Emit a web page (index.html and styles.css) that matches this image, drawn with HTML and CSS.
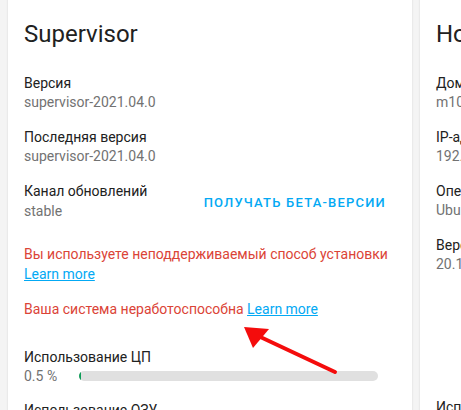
FILE: index.html
```html
<!DOCTYPE html>
<html lang="ru">
  <head>
    <meta charset="UTF-8" />
    <meta name="viewport" content="width=device-width, initial-scale=1.0" />
    <title>Supervisor</title>
    <link rel="stylesheet" href="styles.css">
  </head>
  <body>
    <main class="cards">
      <section class="card">
        <h1 class="card-title">Supervisor</h1>
        <div class="row">
          <div>
            <div class="label">Версия</div>
            <div class="value">supervisor-2021.04.0</div>
          </div>
        </div>
        <div class="row">
          <div>
            <div class="label">Последняя версия</div>
            <div class="value">supervisor-2021.04.0</div>
          </div>
        </div>
        <div class="row row-action">
          <div>
            <div class="label">Канал обновлений</div>
            <div class="value">stable</div>
          </div>
          <button class="btn">Получать бета-версии</button>
        </div>
        <div class="error">
          Вы используете неподдерживаемый способ установки
          <a href="#">Learn more</a>
        </div>
        <div class="error">
          Ваша система неработоспособна <a href="#">Learn more</a>
        </div>
        <div class="row row-metric">
          <div class="label">Использование ЦП</div>
          <div class="metric">
            <span class="value">0.5 %</span>
            <div class="bar"><div class="bar-fill" style="width: 0.5%"></div></div>
          </div>
        </div>
        <div class="row row-metric">
          <div class="label">Использование ОЗУ</div>
        </div>
      </section>

      <section class="card card-side">
        <h1 class="card-title">Host</h1>
        <div class="row">
          <div>
            <div class="label">Доменное имя</div>
            <div class="value">m10</div>
          </div>
        </div>
        <div class="row">
          <div>
            <div class="label">IP-адрес</div>
            <div class="value">192.168.1.10</div>
          </div>
        </div>
        <div class="row">
          <div>
            <div class="label">Операционная система</div>
            <div class="value">Ubuntu</div>
          </div>
        </div>
        <div class="row">
          <div>
            <div class="label">Версия Docker</div>
            <div class="value">20.10</div>
          </div>
        </div>
        <div class="row row-last">
          <div class="label">Использование</div>
        </div>
      </section>
    </main>

    <svg class="arrow" width="461" height="410" viewBox="0 0 461 410">
      <line x1="335" y1="372" x2="254" y2="334" stroke="#f40c0c" stroke-width="4" stroke-linecap="round" />
      <polygon points="244,327 269,329 253,348" fill="#f40c0c" />
    </svg>
  </body>
</html>
```

FILE: styles.css
```css
body {
  margin: 0;
  overflow: hidden;
  background: #f4f4f4;
  font-family: Roboto, "Noto Sans", sans-serif;
  color: #212121;
  font-size: 14px;
}

.cards {
  display: flex;
  gap: 8px;
  padding: 0 8px;
  margin-top: -10px;
}

.card {
  flex: 0 0 404px;
  background: #fff;
  box-shadow: 0 0 2px rgba(0, 0, 0, 0.12);
  padding: 18px 16px 0;
  height: 440px;
  box-sizing: border-box;
}
.card-side {
  flex: 0 0 300px;
}

.card-title {
  margin: 10px 0 24px;
  font-size: 24px;
  font-weight: 400;
  line-height: 32px;
}

.row {
  display: flex;
  align-items: center;
  justify-content: space-between;
  margin-bottom: 16px;
}
.label {
  line-height: 19px;
}
.value {
  line-height: 19px;
  color: #727272;
}
.row-action .value {
  line-height: 21px;
}

.btn {
  border: 0;
  background: none;
  padding: 8px;
  margin-right: 2px;
  font-family: inherit;
  font-size: 13px;
  font-weight: 500;
  letter-spacing: 1.2px;
  text-transform: uppercase;
  color: #03a9f4;
}

.error {
  color: #db4437;
  line-height: 20px;
  margin: 22px 0 0;
}
.error + .error {
  margin-top: 15px;
}
.error a {
  color: #03a9f4;
}

.row-metric {
  display: block;
  margin-top: 29px;
  margin-bottom: 0;
}
.row-metric + .row-metric {
  margin-top: 16px;
}
.metric {
  display: flex;
  align-items: center;
  gap: 22px;
  height: 18px;
}
.bar {
  width: 299px;
  height: 10px;
  border-radius: 5px;
  background: #e0e0e0;
  overflow: hidden;
}
.bar-fill {
  min-width: 2px;
  height: 100%;
  background: #0f9d58;
}

.row-last {
  margin-top: 124px;
}

.arrow {
  position: absolute;
  left: 0;
  top: 0;
}
```
